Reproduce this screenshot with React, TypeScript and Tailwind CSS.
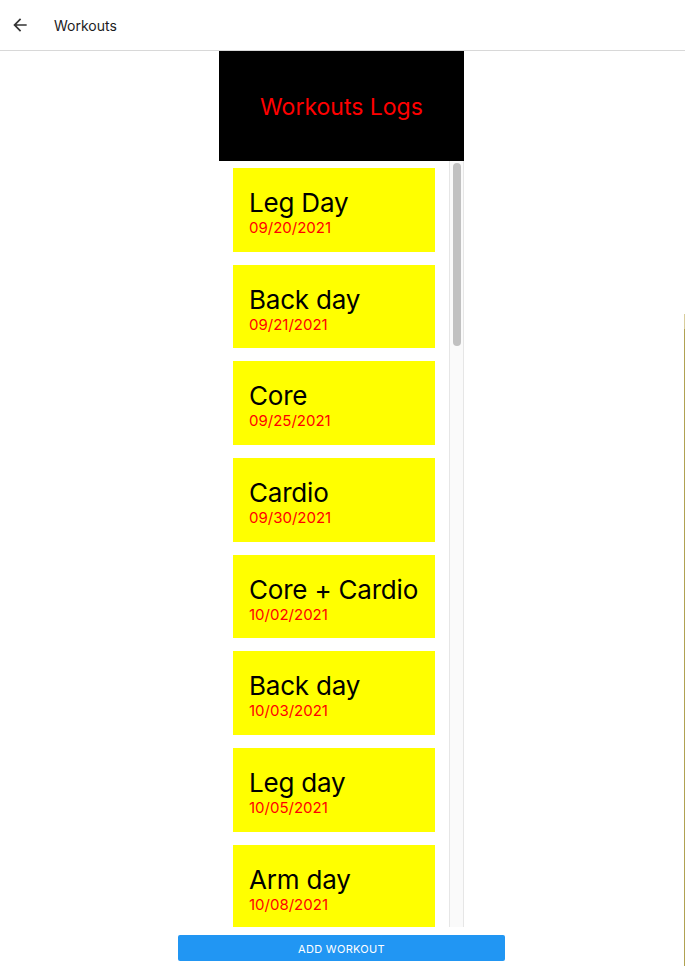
const workouts = [
  { name: 'Leg Day', date: '09/20/2021' },
  { name: 'Back day', date: '09/21/2021' },
  { name: 'Core', date: '09/25/2021' },
  { name: 'Cardio', date: '09/30/2021' },
  { name: 'Core + Cardio', date: '10/02/2021' },
  { name: 'Back day', date: '10/03/2021' },
  { name: 'Leg day', date: '10/05/2021' },
  { name: 'Arm day', date: '10/08/2021' },
];

const BackArrow = () => (
  <svg width="20" height="20" viewBox="0 0 24 24" fill="#333333">
    <path d="M20 11H7.83l5.59-5.59L12 4l-8 8 8 8 1.41-1.41L7.83 13H20v-2z" />
  </svg>
);

const App = () => {
  return (
    <div className="relative h-[966px] w-full overflow-hidden bg-white font-['Inter',sans-serif]">
      {/* top bar */}
      <div className="flex h-[51px] items-center border-b border-[#d8d8d8] bg-white">
        <div className="flex w-[54px] justify-start pl-[10px]">
          <BackArrow />
        </div>
        <span className="text-[14px] text-[#1c1c1e]">Workouts</span>
      </div>

      <div className="flex flex-col items-center pr-[2px]">
        <div className="flex h-[110px] w-[245px] items-center justify-center bg-black pt-[3px]">
          <h1 className="text-[23px] text-[#ff0000]">Workouts Logs</h1>
        </div>

        <div className="flex h-[766px] w-[245px]">
          <div className="flex flex-1 flex-col items-center gap-[13px] overflow-hidden pt-[7px]">
            {workouts.map((w, i) => (
              <div key={i} className="flex h-[83.7px] w-[202px] shrink-0 flex-col justify-center bg-[#ffff00] px-4 pt-[4px]">
                <p className="whitespace-nowrap text-[26px] leading-[31px] tracking-[-0.2px] text-black">{w.name}</p>
                <p className="text-[15px] leading-[19px] text-[#ff0000]">{w.date}</p>
              </div>
            ))}
          </div>
          {/* scrollbar */}
          <div className="w-[15px] border-x border-[#e6e6e6] bg-[#fafafa] pt-[2px]">
            <div className="mx-auto h-[183px] w-[8px] rounded-full bg-[#c1c1c1]" />
          </div>
        </div>

        <button
          type="button"
          className="mt-[8px] h-[26px] w-[327px] rounded-[2px] bg-[#2196f3] pt-[3px] text-[11px] uppercase tracking-[0.3px] text-white"
        >
          Add Workout
        </button>
      </div>

      <div className="absolute right-0 top-[314px] bottom-0 flex w-px flex-col">
        <div className="h-[15px] bg-[#d8cd9c]" />
        <div className="flex-1 bg-[#b0a252]" />
      </div>
    </div>
  );
};

export default App;
